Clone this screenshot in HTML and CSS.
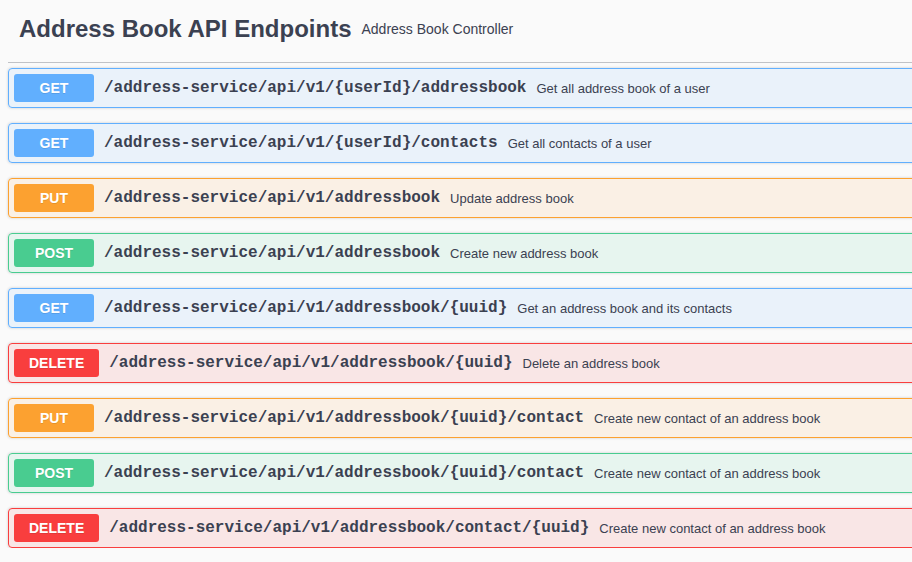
FILE: index.html
```html
<!DOCTYPE html>
<html>
<head>
<meta charset="utf-8">
<link rel="stylesheet" href="styles.css">
</head>
<body>
<div class="page">
  <h4 class="tag">Address Book API Endpoints<small class="tag-desc">Address Book Controller</small></h4>
  <div class="ops">
    <div class="op op-get"><span class="method">GET</span><span class="path">/address-service/api/v1/{userId}/addressbook</span><span class="desc">Get all address book of a user</span></div>
    <div class="op op-get"><span class="method">GET</span><span class="path">/address-service/api/v1/{userId}/contacts</span><span class="desc">Get all contacts of a user</span></div>
    <div class="op op-put"><span class="method">PUT</span><span class="path">/address-service/api/v1/addressbook</span><span class="desc">Update address book</span></div>
    <div class="op op-post"><span class="method">POST</span><span class="path">/address-service/api/v1/addressbook</span><span class="desc">Create new address book</span></div>
    <div class="op op-get"><span class="method">GET</span><span class="path">/address-service/api/v1/addressbook/{uuid}</span><span class="desc">Get an address book and its contacts</span></div>
    <div class="op op-delete"><span class="method">DELETE</span><span class="path">/address-service/api/v1/addressbook/{uuid}</span><span class="desc">Delete an address book</span></div>
    <div class="op op-put"><span class="method">PUT</span><span class="path">/address-service/api/v1/addressbook/{uuid}/contact</span><span class="desc">Create new contact of an address book</span></div>
    <div class="op op-post"><span class="method">POST</span><span class="path">/address-service/api/v1/addressbook/{uuid}/contact</span><span class="desc">Create new contact of an address book</span></div>
    <div class="op op-delete"><span class="method">DELETE</span><span class="path">/address-service/api/v1/addressbook/contact/{uuid}</span><span class="desc">Create new contact of an address book</span></div>
  </div>
</div>
</body>
</html>
```

FILE: styles.css
```css
html, body {
  margin: 0;
  padding: 0;
  background: #fafafa;
  overflow: hidden;
  font-family: "Liberation Sans", Arial, sans-serif;
  color: #3b4151;
}
.page {
  width: 940px;
  padding-left: 8px;
}
.tag {
  box-sizing: border-box;
  height: 63px;
  margin: 0 0 5px 0;
  padding: 0 20px 5px 11px;
  display: flex;
  align-items: center;
  font-size: 24px;
  font-weight: bold;
  color: #3b4151;
  border-bottom: 1px solid rgba(59, 65, 81, 0.3);
}
.tag-desc {
  font-size: 14px;
  font-weight: normal;
  padding: 0 10px;
  flex: 1;
}
.ops {
  display: flex;
  flex-direction: column;
  gap: 15px;
}
.op {
  display: flex;
  align-items: center;
  padding: 5px;
  border: 1px solid;
  border-radius: 4px;
  box-shadow: 0 0 3px rgba(0, 0, 0, 0.19);
}
.method {
  box-sizing: border-box;
  min-width: 80px;
  padding: 6px 15px;
  font-size: 14px;
  line-height: 16px;
  font-weight: bold;
  text-align: center;
  color: #fff;
  border-radius: 3px;
  text-shadow: 0 1px 0 rgba(0, 0, 0, 0.1);
}
.path {
  padding: 0 10px;
  font-family: "Liberation Mono", "Courier New", monospace;
  font-size: 16px;
  font-weight: bold;
  color: #3b4151;
}
.desc {
  font-size: 13px;
  color: #3b4151;
}
.op-get { background: rgba(97, 175, 254, 0.1); border-color: #61affe; }
.op-get .method { background: #61affe; }
.op-put { background: rgba(252, 161, 48, 0.1); border-color: #fca130; }
.op-put .method { background: #fca130; }
.op-post { background: rgba(73, 204, 144, 0.1); border-color: #49cc90; }
.op-post .method { background: #49cc90; }
.op-delete { background: rgba(249, 62, 62, 0.1); border-color: #f93e3e; }
.op-delete .method { background: #f93e3e; }
```
